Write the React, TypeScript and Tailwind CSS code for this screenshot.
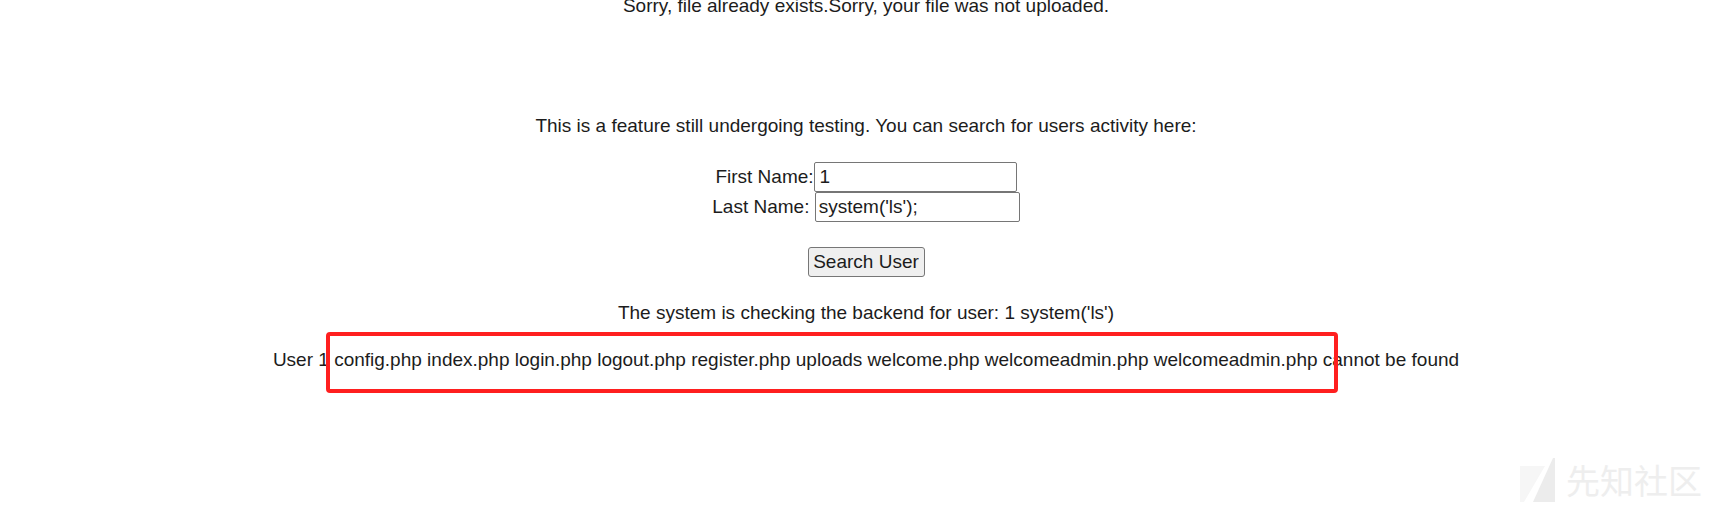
import React from 'react';

const fileList =
  'config.php index.php login.php logout.php register.php uploads welcome.php welcomeadmin.php welcomeadmin.php';

const App: React.FC = () => {
  return (
    <div className="relative h-[506px] w-full overflow-hidden bg-white pl-[13px] text-center font-['Liberation_Sans',Arial,sans-serif] text-[19px] leading-[22px] text-[#1c1c1c]">
      <p className="mt-[-5px]">Sorry, file already exists.Sorry, your file was not uploaded.</p>

      <p className="mt-[98px]">
        This is a feature still undergoing testing. You can search for users activity here:
      </p>

      <form className="mt-[25px]" onSubmit={(e) => e.preventDefault()}>
        <div className="flex h-[30px] items-center justify-center">
          <span>First Name:</span>
          <input
            type="text"
            value="1"
            readOnly
            className="h-[30px] w-[203px] rounded-[2px] border border-[#767676] px-[5px] text-left outline-none"
          />
        </div>
        <div className="flex h-[30px] items-center justify-center">
          <span>Last Name:{'\u00a0'}</span>
          <input
            type="text"
            value="system('ls');"
            readOnly
            className="h-[30px] w-[205px] rounded-[2px] border border-[#767676] px-[3px] text-left outline-none"
          />
        </div>
        <button
          type="submit"
          className="mt-[25px] h-[30px] w-[117px] rounded-[3px] border border-[#767676] bg-[#efefef]"
        >
          Search User
        </button>
      </form>

      <p className="mt-[25px]">The system is checking the backend for user: 1 system('ls')</p>

      <p className="relative mt-[25px]">
        User 1 {fileList} cannot be found
        {/* red highlight box drawn over the output */}
        <span className="pointer-events-none absolute left-[313px] top-[-17px] h-[61px] w-[1012px] rounded-[4px] border-4 border-[#ff1f1f]" />
      </p>

      {/* watermark */}
      <svg
        className="absolute left-[1518px] top-[456px]"
        width="40"
        height="48"
        viewBox="0 0 40 48"
      >
        <polygon points="2,10 27,10 6,46 2,46" fill="#f6f6f6" />
        <polygon points="35,2 37,2 37,46 15,46" fill="#ececec" />
      </svg>
      <span className="absolute left-[1566px] top-[463px] font-['Noto_Sans_CJK_SC',sans-serif] text-[34px] leading-[34px] text-[#eeeeee]">
        先知社区
      </span>
    </div>
  );
};

export default App;
